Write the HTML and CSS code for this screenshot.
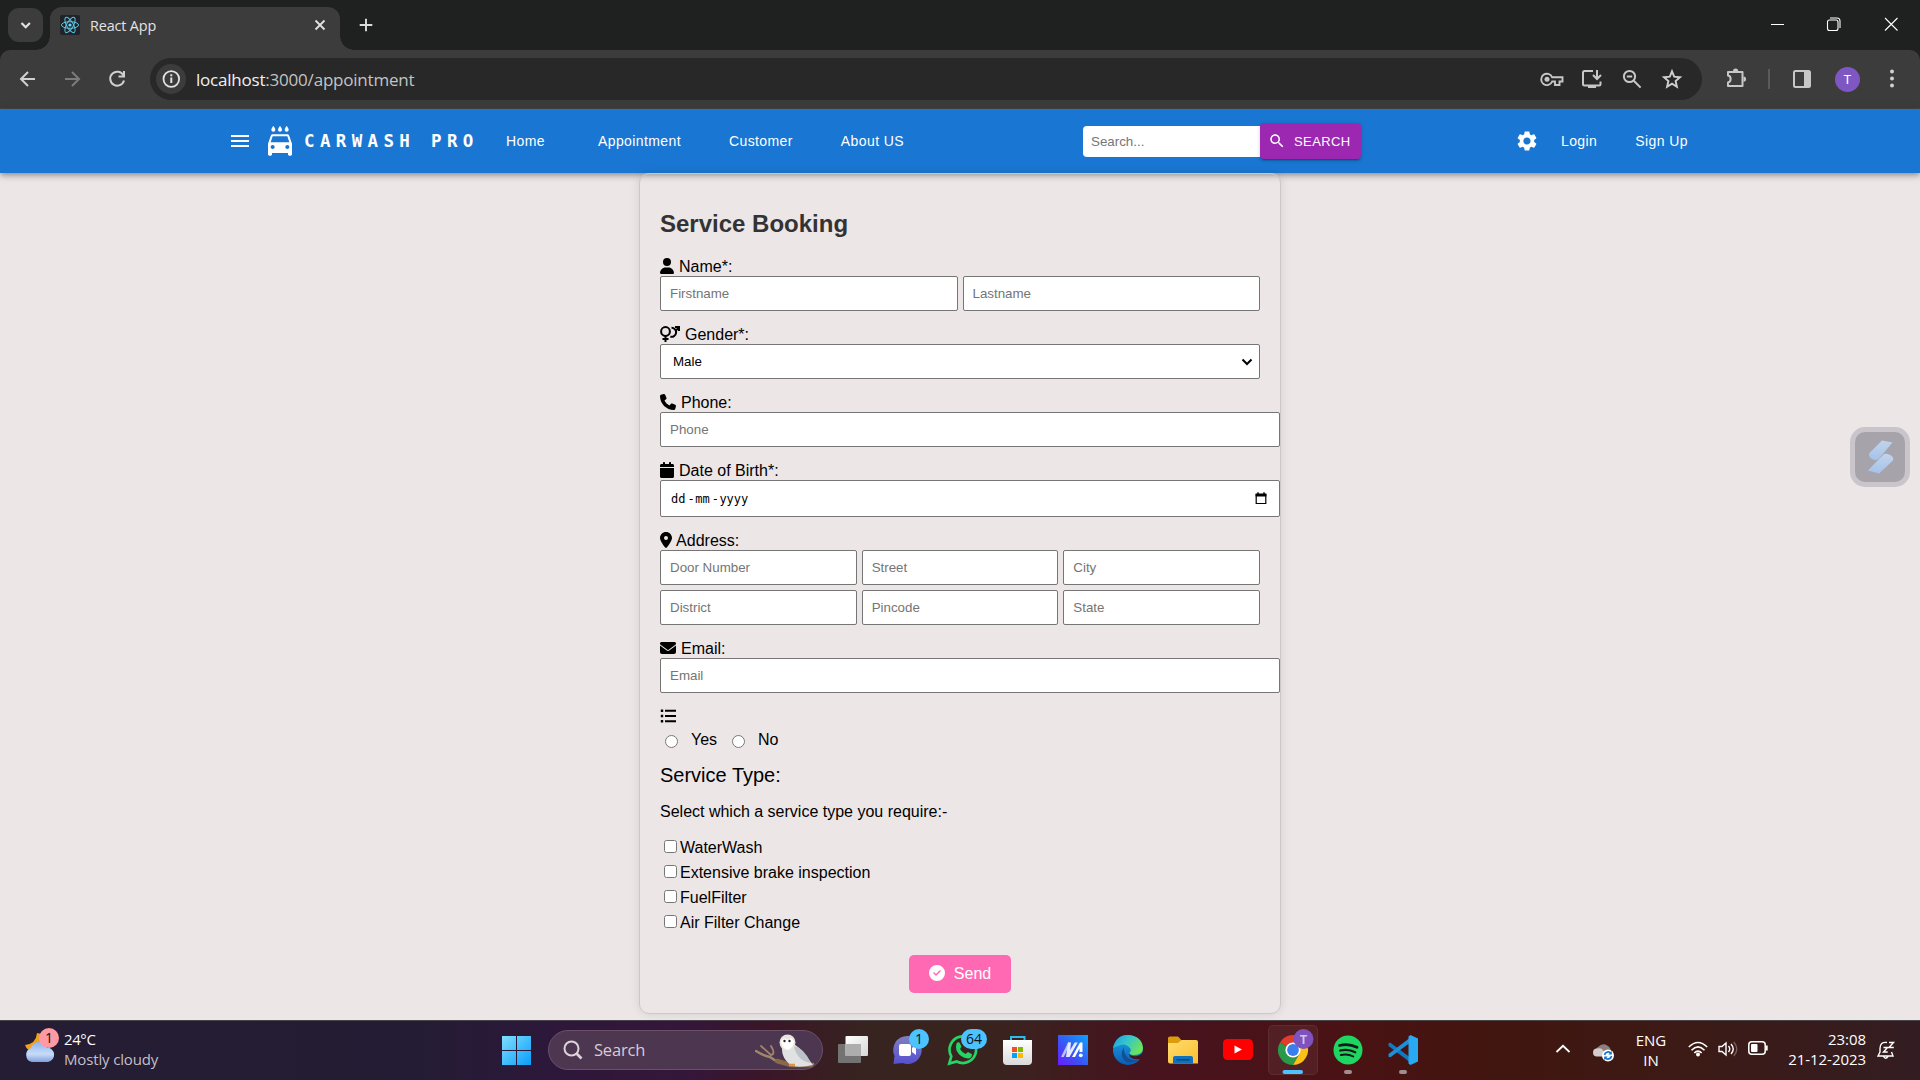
FILE: index.html
```html
<!DOCTYPE html>
<html lang="en">
<head>
<meta charset="utf-8">
<title>React App</title>
<link rel="stylesheet" href="styles.css">
</head>
<body>
<div class="browser">
<div class="tabstrip">
  <div class="tab-search"><svg width="35" height="34" viewBox="0 0 35 34"><path d="M13.500 15l4.200 4.200 4.200-4.200" fill="none" stroke="#e3e3e3" stroke-width="2.200"/></svg></div>
  <div class="tab">
    <svg class="favicon" width="20" height="20" viewBox="0 0 20 20"><rect width="20" height="20" rx="2" fill="#20232a"/><g fill="none" stroke="#5cc4dd" stroke-width="1"><ellipse cx="10" cy="10" rx="8.600" ry="3.300"/><ellipse cx="10" cy="10" rx="8.600" ry="3.300" transform="rotate(60 10 10)"/><ellipse cx="10" cy="10" rx="8.600" ry="3.300" transform="rotate(120 10 10)"/></g><circle cx="10" cy="10" r="1.600" fill="#61dafb"/></svg>
    <span class="tab-title">React App</span>
    <svg class="tab-close" width="12" height="12" viewBox="0 0 12 12"><path d="M1.500 1.500l9 9M10.500 1.500l-9 9" stroke="#e3e3e3" stroke-width="1.800"/></svg>
  </div>
  <svg class="new-tab" width="14" height="14" viewBox="0 0 14 14"><path d="M7 .7v12.600M.7 7h12.600" stroke="#dcdcdc" stroke-width="1.900"/></svg>
  <div class="window-controls">
    <svg width="16" height="16" viewBox="0 0 16 16"><path d="M2 8.500h13" stroke="#fff" stroke-width="1"/></svg>
    <svg width="16" height="16" viewBox="0 0 16 16"><g fill="none" stroke="#fff" stroke-width="1.100"><rect x="1.500" y="4" width="10.500" height="10.500" rx="2"/><path d="M4 2h7a3 3 0 0 1 3 3v7"/></g></svg>
    <svg width="16" height="16" viewBox="0 0 16 16"><path d="M2 2l12.500 12.500M14.500 2L2 14.500" stroke="#fff" stroke-width="1.100"/></svg>
  </div>
</div>
<div class="toolbar">
  <div class="nav-buttons">
    <svg width="24" height="24" viewBox="0 0 24 24"><path d="M19 12H5.500M12 5l-7 7 7 7" fill="none" stroke="#d0d0d0" stroke-width="2"/></svg>
    <svg width="24" height="24" viewBox="0 0 24 24"><path d="M4 12H17.500M11 5l7 7-7 7" fill="none" stroke="#7c7c7c" stroke-width="2"/></svg>
    <svg width="24" height="24" viewBox="0 0 24 24"><path d="M17.500 8.500A7 7 0 1 0 18 13.500" fill="none" stroke="#d0d0d0" stroke-width="2"/><path d="M18 4v5.500h-5.500" fill="none" stroke="#d0d0d0" stroke-width="2"/></svg>
  </div>
  <div class="omnibox">
    <div class="site-info"><svg width="30" height="30" viewBox="0 0 30 30"><circle cx="15.300" cy="15" r="7.800" fill="none" stroke="#e3e3e3" stroke-width="1.800"/><path d="M15.300 13.500v5.500M15.300 10.300v2" stroke="#e3e3e3" stroke-width="2"/></svg></div>
    <div class="url">localhost<span>:3000/appointment</span></div>
    <div class="omni-icons">
      <svg width="24" height="24" viewBox="0 0 24 24"><g fill="none" stroke="#c7c7c7" stroke-width="1.900"><path d="M12.200 10.300A5.700 5.700 0 1 0 12.200 14.500H15v3.500h4.500v-3.500H22.500v-4.200z"/></g><circle cx="7" cy="12.300" r="2.500" fill="#c7c7c7"/></svg>
      <svg width="24" height="24" viewBox="0 0 24 24"><g fill="none" stroke="#c7c7c7" stroke-width="2"><path d="M13 4H4.500a1.500 1.500 0 0 0-1.500 1.500V17a1.500 1.500 0 0 0 1.500 1.500H19a1.500 1.500 0 0 0 1.500-1.500v-2.500"/><path d="M17 3v8M13 8l4 4 4-4"/></g><path d="M8 18h8v3H8z" fill="#c7c7c7"/></svg>
      <svg width="24" height="24" viewBox="0 0 24 24"><g fill="none" stroke="#c7c7c7" stroke-width="2"><circle cx="9.500" cy="9.500" r="5.600"/><path d="M13.800 13.800l6.800 6.800M6.800 9.500h5.400"/></g></svg>
      <svg width="24" height="24" viewBox="0 0 24 24"><path d="M12 4.300l2.200 5.400 5.800.5-4.400 3.800 1.300 5.700-4.900-3-4.900 3 1.300-5.700L4 10.200l5.800-.5z" fill="none" stroke="#d0d0d0" stroke-width="1.900"/></svg>
    </div>
  </div>
  <svg class="extensions" width="24" height="24" viewBox="0 0 24 24"><path d="M4 5h14.500v14H4v-3.500c3.500-.5 3.500-6.500 0-7z" fill="none" stroke="#c7c7c7" stroke-width="2" stroke-linejoin="round"/><path d="M9 4a2.600 2.600 0 0 1 5.200 0zM19.500 9.500a2.600 2.600 0 0 1 0 5.200z" fill="#c7c7c7"/></svg>
  <span class="divider"></span>
  <svg class="sidepanel" width="20" height="20" viewBox="0 0 20 20"><rect x="2" y="2" width="16" height="16" rx="1.500" fill="none" stroke="#c7c7c7" stroke-width="2"/><path d="M12 2h6v16h-6z" fill="#c7c7c7"/></svg>
  <div class="avatar">T</div>
  <svg class="kebab" width="6" height="20" viewBox="0 0 6 20"><g fill="#d0d0d0"><circle cx="3" cy="2.500" r="2"/><circle cx="3" cy="9.500" r="2"/><circle cx="3" cy="16.500" r="2"/></g></svg>
</div>
</div>

<header class="appbar">
  <svg class="menu" width="24" height="24" viewBox="0 0 24 24" fill="#fff"><path d="M3 18h18v-2H3v2zm0-5h18v-2H3v2zm0-7v2h18V6H3z"/></svg>
  <svg class="car" width="32" height="32" viewBox="0 0 24 24" fill="#fff"><path d="M17 5c.83 0 1.500-.67 1.500-1.500 0-1-1.500-2.700-1.500-2.700s-1.500 1.700-1.500 2.700c0 .83.67 1.500 1.500 1.500zm-5 0c.83 0 1.500-.67 1.500-1.500 0-1-1.500-2.700-1.500-2.700s-1.500 1.700-1.500 2.700c0 .83.67 1.500 1.500 1.500zM7 5c.83 0 1.500-.67 1.500-1.500C8.500 2.500 7 .8 7 .8S5.500 2.500 5.500 3.500C5.500 4.330 6.170 5 7 5zm11.920 3.010C18.720 7.420 18.160 7 17.500 7h-11c-.66 0-1.210.42-1.420 1.010L3 14v8c0 .55.45 1 1 1h1c.55 0 1-.45 1-1v-1h12v1c0 .55.45 1 1 1h1c.55 0 1-.45 1-1v-8l-2.080-5.990zM6.500 18c-.83 0-1.500-.67-1.500-1.500S5.670 15 6.500 15s1.500.67 1.500 1.500S7.330 18 6.500 18zm11 0c-.83 0-1.500-.67-1.500-1.500s.67-1.500 1.500-1.500 1.500.67 1.500 1.500-.67 1.500-1.500 1.500zM5 13l1.500-4.500h11L19 13H5z"/></svg>
  <div class="brand">CARWASH PRO</div>
  <nav class="links"><a>Home</a><a>Appointment</a><a>Customer</a><a>About US</a></nav>
  <div class="search">
    <input class="search-input" placeholder="Search...">
    <button class="search-button"><svg width="18" height="18" viewBox="0 0 24 24" fill="#fff"><path d="M15.500 14h-.79l-.28-.27C15.410 12.590 16 11.110 16 9.500 16 5.910 13.090 3 9.500 3S3 5.910 3 9.500 5.910 16 9.500 16c1.610 0 3.090-.59 4.230-1.570l.27.28v.79l5 4.990L20.490 19l-4.990-5zm-6 0C7.010 14 5 11.990 5 9.500S7.010 5 9.500 5 14 7.010 14 9.500 11.990 14 9.500 14z"/></svg>SEARCH</button>
  </div>
  <svg class="gear" width="24" height="24" viewBox="0 0 24 24" fill="#fff"><path d="M19.140 12.940c.04-.3.06-.61.06-.94 0-.32-.02-.64-.07-.94l2.030-1.580c.18-.14.23-.41.12-.61l-1.920-3.320c-.12-.22-.37-.29-.59-.22l-2.390.96c-.5-.38-1.030-.7-1.620-.94l-.36-2.540c-.04-.24-.24-.41-.48-.41h-3.840c-.24 0-.43.17-.47.41l-.36 2.540c-.59.24-1.130.57-1.620.94l-2.390-.96c-.22-.08-.47 0-.59.22L2.740 8.870c-.12.21-.08.47.12.61l2.030 1.580c-.05.3-.09.63-.09.94s.02.64.07.94l-2.030 1.580c-.18.14-.23.41-.12.61l1.920 3.320c.12.22.37.29.59.22l2.390-.96c.5.38 1.030.7 1.620.94l.36 2.540c.05.24.24.41.48.41h3.840c.24 0 .44-.17.47-.41l.36-2.540c.59-.24 1.130-.56 1.620-.94l2.390.96c.22.08.47 0 .59-.22l1.920-3.320c.12-.22.07-.47-.12-.61l-2.010-1.580zM12 15.600c-1.980 0-3.600-1.620-3.600-3.600s1.620-3.600 3.600-3.600 3.600 1.620 3.600 3.600-1.620 3.600-3.600 3.600z"/></svg>
  <nav class="account"><a>Login</a><a>Sign Up</a></nav>
</header>

<main class="page">
  <form class="card">
    <h2>Service Booking</h2>
    <div class="field">
      <label><svg width="14" height="16" viewBox="0 0 448 512"><path d="M224 256A128 128 0 1 0 224 0a128 128 0 1 0 0 256zm-45.700 48C79.800 304 0 383.800 0 482.300C0 498.700 13.300 512 29.700 512H418.300c16.400 0 29.700-13.300 29.700-29.700C448 383.800 368.200 304 269.700 304H178.300z"/></svg> Name*:</label>
      <div class="grid two"><input placeholder="Firstname"><input placeholder="Lastname"></div>
    </div>
    <div class="field">
      <label><svg width="20" height="16" viewBox="0 0 20 16"><g fill="none" stroke="#000" stroke-width="2"><circle cx="5.500" cy="5.500" r="4.400"/><path d="M5.500 10v6M2.500 13h6"/><path d="M11.500 1.800A4.500 4.500 0 1 1 10.300 10.600M15.800 4.600L19 1.200M15 1H19v4"/></g></svg> Gender*:</label>
      <div class="select">Male<svg width="12" height="8" viewBox="0 0 12 8"><path d="M1.500 1.500L6 6l4.500-4.500" fill="none" stroke="#000" stroke-width="2"/></svg></div>
    </div>
    <div class="field wide">
      <label><svg width="16" height="16" viewBox="0 0 512 512"><path d="M164.900 24.600c-7.700-18.600-28-28.500-47.400-23.200l-88 24C12.100 30.200 0 46 0 64C0 311.400 200.600 512 448 512c18 0 33.800-12.100 38.600-29.500l24-88c5.300-19.400-4.600-39.700-23.200-47.400l-96-40c-16.300-6.800-35.200-2.100-46.300 11.600L304.700 368C234.300 334.700 177.300 277.700 144 207.300L193.300 167c13.700-11.200 18.400-30 11.600-46.300l-40-96z"/></svg> Phone:</label>
      <input placeholder="Phone">
    </div>
    <div class="field wide">
      <label><svg width="14" height="16" viewBox="0 0 448 512"><path d="M96 32V64H48C21.500 64 0 85.500 0 112v48H448V112c0-26.500-21.500-48-48-48H352V32c0-17.700-14.300-32-32-32s-32 14.300-32 32V64H160V32c0-17.700-14.300-32-32-32S96 14.300 96 32zM448 192H0V464c0 26.500 21.500 48 48 48H400c26.500 0 48-21.500 48-48V192z"/></svg> Date of Birth*:</label>
      <div class="date"><span>dd</span><i>-</i><span>mm</span><i>-</i><span>yyyy</span><svg width="12" height="13" viewBox="0 0 12 13"><path d="M1.200 2.500h9.600v9H1.200z" fill="none" stroke="#000" stroke-width="1.200"/><path d="M.6 1.600h10.800v2.900H.6zM2.300.3h1.400v2H2.300zM8.300.3h1.400v2H8.300z"/></svg></div>
    </div>
    <div class="field">
      <label><svg width="12" height="16" viewBox="0 0 384 512"><path d="M215.700 499.200C267 435 384 279.400 384 192C384 86 298 0 192 0S0 86 0 192c0 87.400 117 243 168.300 307.200c12.300 15.300 35.100 15.300 47.400 0zM192 128a64 64 0 1 1 0 128 64 64 0 1 1 0-128z"/></svg> Address:</label>
      <div class="grid three"><input placeholder="Door Number"><input placeholder="Street"><input placeholder="City"><input placeholder="District"><input placeholder="Pincode"><input placeholder="State"></div>
    </div>
    <div class="field wide">
      <label><svg width="16" height="16" viewBox="0 0 512 512"><path d="M48 64C21.500 64 0 85.500 0 112c0 15.100 7.100 29.300 19.200 38.400L236.800 313.600c11.400 8.500 27 8.500 38.400 0L492.800 150.400c12.100-9.100 19.200-23.300 19.200-38.400c0-26.500-21.500-48-48-48H48zM0 176V384c0 35.300 28.700 64 64 64H448c35.300 0 64-28.700 64-64V176L294.400 339.200c-22.800 17.100-54 17.100-76.800 0L0 176z"/></svg> Email:</label>
      <input placeholder="Email">
    </div>
    <label><svg width="16" height="16" viewBox="0 0 16 16"><path d="M.8 1.500h2.400v2.400H.8zM.8 6.800h2.400v2.400H.8zM.8 12.100h2.400v2.400H.8zM5 1.700h11v2H5zM5 7h11v2H5zM5 12.300h11v2H5z"/></svg></label>
    <div class="radios"><input type="radio" name="ac"><span>Yes</span><input type="radio" name="ac"><span>No</span></div>
    <h6>Service Type:</h6>
    <p>Select which a service type you require:-</p>
    <div class="checks">
      <div><input type="checkbox">WaterWash</div>
      <div><input type="checkbox">Extensive brake inspection</div>
      <div><input type="checkbox">FuelFilter</div>
      <div><input type="checkbox">Air Filter Change</div>
    </div>
    <button class="send" type="button"><svg width="16" height="16" viewBox="0 0 512 512" fill="#fff"><path d="M256 512A256 256 0 1 0 256 0a256 256 0 1 0 0 512zM369 209L241 337c-9.400 9.400-24.600 9.400-33.900 0l-64-64c-9.400-9.400-9.400-24.600 0-33.900s24.600-9.400 33.900 0l47 47L335 175c9.400-9.400 24.600-9.400 33.900 0s9.400 24.600 0 33.900z"/></svg><span>Send</span></button>
  </form>
  <div class="float-button"><svg width="50" height="50" viewBox="0 0 50 50"><defs><linearGradient id="fl" x1="0" y1="0" x2="0" y2="1"><stop offset="0" stop-color="#c2d4ec"/><stop offset="1" stop-color="#a5c2ea"/></linearGradient></defs><path d="M27 8.500L37.500 10.500 24 26.500Q22 28.500 19 28Q13.500 25.500 14 21.500z" fill="url(#fl)"/><path d="M13 38.500L28.500 22.500Q31.500 20.500 36 23.500Q39 25.500 38 28.500L24 41.500z" fill="url(#fl)"/></svg></div>
</main>

<footer class="taskbar">
  <div class="weather">
    <svg width="30" height="36" viewBox="0 0 30 36"><defs><linearGradient id="cl" x1="0" y1="0" x2="0" y2="1"><stop offset="0" stop-color="#8fb4ee"/><stop offset=".6" stop-color="#c9dcf8"/><stop offset="1" stop-color="#7fa0de"/></linearGradient></defs><path d="M12 4q-1 11-12 12 2 7 12 7 9-2 9-12-1-6-9-7z" fill="#f0a020"/><path d="M7 33a7.300 7.300 0 0 1-1-14A8.500 8.500 0 0 1 22 18.500 7.300 7.300 0 0 1 23 33z" fill="url(#cl)"/></svg>
    <span class="alert">1</span>
    <div class="weather-text"><b>24°C</b><span>Mostly cloudy</span></div>
  </div>
  <div class="apps">
    <svg width="50" height="50" viewBox="0 0 50 50"><defs><linearGradient id="wn" x1="0" y1="0" x2="1" y2="1"><stop offset="0" stop-color="#7fe0ff"/><stop offset="1" stop-color="#0a9cfb"/></linearGradient></defs><path d="M11 11h14v14H11zM26 11h14v14H26zM11 26h14v14H11zM26 26h14v14H26z" fill="url(#wn)"/></svg>
    <div class="task-search">
      <svg class="lens" width="20" height="20" viewBox="0 0 20 20"><g fill="none" stroke="#ddd3dc" stroke-width="2"><circle cx="8.500" cy="8.500" r="7"/><path d="M13.500 13.500l5 5" stroke-width="2.600"/></g></svg>
      <span>Search</span>
      <svg class="owl" width="60" height="34" viewBox="0 0 60 34"><g fill="none" stroke="#a0866b" stroke-linecap="round"><path d="M1 17q8 5 14 6 9 7 19 7h24" stroke-width="2.500"/><path d="M6 12l10 9q5-1 0-9" stroke-width="1.800"/><path d="M22 27l14 4h20" stroke-width="4.500" stroke="#8a6848"/></g><path d="M27 12q5 0 8-3 6 1 12 8 5 6 11 14-12 3-20 1-12-6-11-20z" fill="#dfe1e3"/><path d="M39 12q10 2 17 17-14-2-17-17z" fill="#bcc3c8"/><circle cx="32.500" cy="8.500" r="8" fill="#e9e4dd"/><path d="M26 7q3-5 6.500-1Q36 2 39 7q-1 8-6.500 9Q27 15 26 7z" fill="#fff"/><circle cx="29.500" cy="7" r="1.200" fill="#29212b"/><circle cx="34.500" cy="7" r="1.200" fill="#29212b"/><path d="M34 31h6" stroke="#e7923c" stroke-width="2.500"/></svg>
    </div>
    <svg width="50" height="50" viewBox="0 0 50 50"><defs><linearGradient id="tv" x1="0" y1="0" x2="1" y2="1"><stop offset="0" stop-color="#fff"/><stop offset="1" stop-color="#d7d7d7"/></linearGradient></defs><rect x="10" y="19" width="23" height="19" rx="1" fill="#737373"/><rect x="17.500" y="11" width="22.500" height="20" rx="1" fill="url(#tv)"/><path d="M17.500 19H33v12H17.500z" fill="#adadad"/></svg>
    <svg width="50" height="50" viewBox="0 0 50 50"><defs><linearGradient id="ch" x1="0" y1="0" x2="0" y2="1"><stop offset="0" stop-color="#7f7fc0"/><stop offset="1" stop-color="#5750d0"/></linearGradient></defs><path d="M24.500 11a14 14 0 1 1-5 27l-9 1 1-8A14 14 0 0 1 24.500 11z" fill="url(#ch)"/><rect x="16" y="19" width="12" height="12" rx="2" fill="#fff"/><path d="M29 23l4-3v10l-4-3z" fill="#fff"/><circle cx="36" cy="14" r="10" fill="#4cc2ff"/><text x="36" y="19" text-anchor="middle" class="badge-text">1</text></svg>
    <svg width="50" height="50" viewBox="0 0 50 50"><path d="M11.300 38.600l2-7.300A13.300 13.300 0 1 1 18.700 36.500z" fill="none" stroke="#25d366" stroke-width="2.700"/><path d="M18.500 18.500q2-2.500 3.500 0l1.500 3.200q-2 2-1 3 2 3 5 4.300l2.500-2 4 2.200q0 4-4 4.300-8-1-11.500-8-1-4 0-7z" fill="#25d366"/><rect x="23" y="4" width="26" height="20" rx="10" fill="#4cc2ff"/><text x="36" y="19" text-anchor="middle" class="badge-text">64</text></svg>
    <svg width="50" height="50" viewBox="0 0 50 50"><defs><linearGradient id="st" x1="0" y1="0" x2="0" y2="1"><stop offset="0" stop-color="#fff"/><stop offset="1" stop-color="#dadada"/></linearGradient></defs><path d="M18 16v-4h13.500v4" fill="none" stroke="#28bdee" stroke-width="2"/><path d="M10 15h29v21a4 4 0 0 1-4 4H14a4 4 0 0 1-4-4z" fill="url(#st)"/><path d="M19 22h5v5h-5z" fill="#f25022"/><path d="M25 22h5v5h-5z" fill="#7fba00"/><path d="M19 28h5v5h-5z" fill="#00a4ef"/><path d="M25 28h5v5h-5z" fill="#ffb900"/></svg>
    <svg width="50" height="50" viewBox="0 0 50 50"><defs><linearGradient id="ma" x1="1" y1="0" x2="0" y2="1"><stop offset="0" stop-color="#0aa4ff"/><stop offset=".6" stop-color="#3c50f4"/><stop offset="1" stop-color="#6a1cff"/></linearGradient></defs><path d="M10 10h30v30H10z" fill="url(#ma)"/><path d="M13 32l7-14.500h2.800l-7 14.500z" fill="#b9c0fb"/><path d="M18 32l2-14.500h3l-.8 7.500 4.500-7.500h3L21.500 32z" fill="#e6e9ff"/><path d="M24 32l8-14.500h2.500v9.500h-3v-3.500L27 32z" fill="#fff"/><circle cx="32.800" cy="30.300" r="1.900" fill="#fff"/></svg>
    <svg width="50" height="50" viewBox="0 0 50 50"><defs><linearGradient id="eg" x1="0" y1="0" x2="1" y2=".5"><stop offset="0" stop-color="#1c9be4"/><stop offset=".5" stop-color="#35c6cb"/><stop offset="1" stop-color="#6be35c"/></linearGradient><linearGradient id="eb" x1="0" y1="0" x2="0" y2="1"><stop offset="0" stop-color="#1aa7e7"/><stop offset="1" stop-color="#0c5cb4"/></linearGradient></defs><circle cx="25" cy="25" r="15" fill="url(#eb)"/><path d="M10 23Q13 10 25 10q14 1 15 13 0 7-9 7-4 0-5-2 3-2 1-5-5-6-12-2-3 1-5 2z" fill="url(#eg)"/><path d="M21 22q-5 8 1 14 5 4 15-2-6 3-12-1-5-5-4-11z" fill="#124f95"/><path d="M26 28q2 4 8 3 5-1 6-5v8l-3 0q-6 1-10-2z" fill="#43141e"/></svg>
    <svg width="50" height="50" viewBox="0 0 50 50"><defs><linearGradient id="fd" x1="0" y1="0" x2="1" y2="1"><stop offset="0" stop-color="#ffdc70"/><stop offset="1" stop-color="#fbbf2c"/></linearGradient></defs><path d="M10 13q0-1.500 2-1.500h8l3 3v6H10z" fill="#dc9c0c"/><path d="M10 18h10l3.500-3H38q2 0 2 2v21.500H12q-2 0-2-2z" fill="url(#fd)"/><path d="M15 38.500V33q0-2 2-2h16q2 0 2 2v5.500z" fill="#1071bd"/><path d="M18.500 34.800h13" stroke="#0b4585" stroke-width="1.500"/></svg>
    <svg width="50" height="50" viewBox="0 0 50 50"><rect x="10" y="14" width="30" height="21" rx="4.500" fill="#f00"/><path d="M21.500 20.500v8l7.500-4z" fill="#fff"/></svg>
    <div class="app-active"><svg width="50" height="50" viewBox="0 0 50 50"><path d="M25 25L12 17.500A15 15 0 0 1 38 17.500H25z" fill="#e33b2e"/><path d="M12 17.500A15 15 0 0 0 25 40l6.500-11.300L25 25z" fill="#2a9a4a"/><path d="M38 17.500A15 15 0 0 1 25 40l6.500-11.300L25 17.500z" fill="#fbc116"/><circle cx="25" cy="25" r="7.600" fill="#fff"/><circle cx="25" cy="25" r="5.900" fill="#3b7ded"/><circle cx="35.500" cy="14" r="10" fill="#7f52bd"/><text x="35.500" y="18.500" text-anchor="middle" class="t-text">T</text><rect x="14.500" y="45" width="20.500" height="4" rx="2" fill="#4cc2ff"/></svg></div>
    <svg width="50" height="50" viewBox="0 0 50 50"><circle cx="25" cy="25" r="14.500" fill="#1ed760"/><g fill="none" stroke="#15171a" stroke-linecap="round"><path d="M16.500 20.500q9-2.500 17.500 1.800" stroke-width="2.800"/><path d="M17.200 25.500q8-2 15 1.800" stroke-width="2.300"/><path d="M17.800 30q7-1.500 12.500 1.500" stroke-width="1.900"/></g><rect x="21" y="45" width="8" height="4" rx="2" fill="#a08f90"/></svg>
    <svg width="50" height="50" viewBox="0 0 50 50"><path d="M10.500 18.500q1.500-1.500 3 0L33 33v5L10.500 21z" fill="#1279c0"/><path d="M10.500 31.500q1.500 1.500 3 0L33 17v-5L10.500 29z" fill="#1b8fda"/><path d="M32.500 10l7.500 3.500v23L32.500 40l-2-1.500V11.500z" fill="#29a9f4"/><rect x="21" y="45" width="8" height="4" rx="2" fill="#a08f90"/></svg>
  </div>
  <div class="tray">
    <svg class="chevron" width="16" height="10" viewBox="0 0 16 10"><path d="M1.500 8L8 1.800 14.500 8" fill="none" stroke="#fff" stroke-width="1.800"/></svg>
    <svg class="cloud" width="22" height="20" viewBox="0 0 22 20"><path d="M5 14a5 5 0 0 1 0-9q6-6 12 1l2 6z" fill="#8c7f7d"/><path d="M4 14.500a4 4 0 0 1 0-8q5-1 6 2l4 6z" fill="#d4cdcc"/><circle cx="15" cy="13.500" r="6" fill="#fff"/><path d="M11.500 13a3.600 3.600 0 0 1 6.500-1.500M18.500 14a3.600 3.600 0 0 1-6.500 1.500" fill="none" stroke="#1673c9" stroke-width="1.700"/><path d="M18.800 9v3.500h-3.500zM11.200 18v-3.500h3.500z" fill="#1673c9"/></svg>
    <div class="lang"><span>ENG</span><span>IN</span></div>
    <svg class="wifi" width="20" height="16" viewBox="0 0 20 16"><g fill="none" stroke="#fff" stroke-width="1.600"><path d="M.8 6q9.200-9 18.400 0M3.500 9.200q6.500-6.600 13 0M6.300 12q3.700-3.700 7.400 0"/></g><circle cx="10" cy="13.500" r="2" fill="#fff"/></svg>
    <svg class="speaker" width="20" height="16" viewBox="0 0 20 16"><g fill="none" stroke="#fff" stroke-width="1.400"><path d="M1 5.500h3L8 2v12l-4-3.500H1z"/><path d="M10.500 5q2.500 3 0 6M13 3q4.500 5 0 10"/></g><path d="M15.800 1q6 7 0 14" fill="none" stroke="#78605d" stroke-width="1.300"/></svg>
    <svg class="battery" width="20" height="14" viewBox="0 0 20 14"><rect x=".8" y=".8" width="16.400" height="12.400" rx="3" fill="none" stroke="#fff" stroke-width="1.500"/><rect x="3" y="3" width="6.500" height="8" rx="1" fill="#fff"/><path d="M18 4.500h1.700v5H18z" fill="#fff"/></svg>
    <div class="clock"><span>23:08</span><span>21-12-2023</span></div>
    <svg class="bell" width="20" height="20" viewBox="0 0 20 20"><g fill="none" stroke="#fff" stroke-width="1.400"><path d="M11 2.500Q4 1.500 4 8.500V12L2 16h15l-1.500-4M7.500 16.500q2 3.500 4.500 0"/><path d="M7.500 7.500h4l-4 4.500h4.200M13 2.500h4.500L13 7.500h4.800"/></g></svg>
  </div>
</footer>
</body>
</html>
```
FILE: styles.css
```css
* { box-sizing: border-box; }
body { margin: 0; width: 1920px; height: 1080px; overflow: hidden; display: flex; flex-direction: column; background: #ece6e6; font-family: "Liberation Sans", Arial, sans-serif; font-size: 16px; color: #000; }
svg { display: block; flex: none; }
button, input { margin: 0; font-family: inherit; }

.browser { flex: none; background: #1f2120; }
.tabstrip { height: 50px; display: flex; font-family: "Open Sans", "Noto Sans", sans-serif; padding-left: 8px; }
.tab-search { width: 35px; height: 34px; margin-top: 8px; border-radius: 11px; background: #3c3c3c; }
.tab { position: relative; width: 290px; height: 43px; margin: 7px 0 0 7px; padding: 0 14px 0 10px; display: flex; align-items: center; border-radius: 12px 12px 0 0; background: #3c3c3c; }
.tab::before, .tab::after { content: ""; position: absolute; bottom: 0; width: 14px; height: 14px; }
.tab::before { left: -14px; background: radial-gradient(circle at 0 0, transparent 13.5px, #3c3c3c 14px); }
.tab::after { right: -14px; background: radial-gradient(circle at 100% 0, transparent 13.5px, #3c3c3c 14px); }
.favicon { margin-bottom: 7px; }
.tab-title { margin: 0 auto 6px 10px; font-size: 14.4px; letter-spacing: -0.15px; color: #e3e3e3; }
.tab-close { margin-bottom: 7px; }
.new-tab { margin: 18px 0 0 19px; }
.window-controls { display: flex; gap: 41px; margin: 16px 21px 0 auto; }

.toolbar { height: 59px; display: flex; align-items: center; padding: 0 0 0 16px; background: #3c3c3c; border-bottom: 1px solid #474543; border-radius: 10px 10px 0 0; }
.nav-buttons { display: flex; gap: 21px; width: 134px; }
.omnibox { width: 1552px; height: 42px; display: flex; align-items: center; padding: 0 18px 0 6px; border-radius: 21px; background: #282828; }
.site-info { width: 30px; height: 30px; border-radius: 50%; background: #3c3c3c; }
.url { margin: 0 auto 0 10px; font-family: "Open Sans", "Noto Sans", sans-serif; font-size: 17px; letter-spacing: -0.21px; color: #f0f0f0; }
.url span { color: #c3c3c3; }
.omni-icons { display: flex; gap: 16px; }
.extensions { margin-left: 22px; }
.divider { width: 2px; height: 20px; margin-left: 20px; background: #5a5a5a; }
.sidepanel { margin-left: 22px; }
.avatar { width: 25px; height: 25px; margin-left: 23px; border-radius: 50%; background: #7e57c2; color: #fff; font: 13px/25px Roboto, sans-serif; text-align: center; }
.kebab { margin-left: 29px; }

.appbar { position: relative; height: 64px; flex: none; display: flex; align-items: center; padding-left: 228px; background: #1976d2; color: #fff; box-shadow: 0 2px 4px -1px rgba(0,0,0,.2), 0 4px 5px 0 rgba(0,0,0,.14), 0 1px 10px 0 rgba(0,0,0,.12); }
.car { margin-left: 12px; }
.brand { width: 202px; margin-left: 8px; font: bold 17.5px/32px "DejaVu Sans Mono", monospace; letter-spacing: 5.35px; white-space: nowrap; }
.links, .account { display: flex; font-size: 14px; letter-spacing: 0.4px; }
.links { gap: 48px; width: 577px; }
.links a:first-child { margin-right: 5px; }
.search { display: flex; align-items: center; }
.search-input { width: 177px; height: 31px; border: 0; border-radius: 4px 0 0 4px; padding: 0 8px; font-size: 13.333px; }
.search-button { width: 101px; height: 36px; display: flex; align-items: center; gap: 8px; padding: 0 8px; border: 0; border-radius: 4px; background: #9c27b0; color: #fff; font-size: 13px; letter-spacing: 0.4px; box-shadow: 0 3px 1px -2px rgba(0,0,0,.2), 0 2px 2px 0 rgba(0,0,0,.14), 0 1px 5px 0 rgba(0,0,0,.12); }
.gear { margin-left: 154px; }
.account { margin-left: 22px; gap: 38px; }

.page { position: relative; flex: 1; display: flex; justify-content: center; align-items: flex-start; }
.card { width: 642px; height: 841px; padding: 36px 20px 0; border: 1px solid #ccc8c8; border-radius: 10px; box-shadow: 0 0 10px rgba(0,0,0,.1); display: flex; flex-direction: column; }
h2 { margin: 0 0 21px; font-size: 24px; line-height: 27px; color: #333; }
label { display: block; height: 18px; line-height: 18px; white-space: pre; }
label svg { display: inline-block; vertical-align: -2px; margin-right: 0.55px; }
.field { margin-bottom: 15px; }
.wide { width: 620px; }
.grid { display: grid; gap: 5px; }
.two { grid-template-columns: 1fr 1fr; }
.three { grid-template-columns: 1fr 1fr 1fr; }
.field input, .select, .date { width: 100%; height: 35px; min-width: 0; border: 1px solid #767676; border-radius: 2px; background: #fff; padding: 0 9px; font-size: 13.333px; }
.field input { display: block; }
input::placeholder { color: #757575; opacity: 1; }
.select { display: flex; align-items: center; justify-content: space-between; padding: 0 6px 0 12px; }
.date { height: 37px; display: flex; align-items: center; padding: 0 12px 0 10px; font: 12px "DejaVu Sans Mono", monospace; }
.date i { font-style: normal; padding: 0 0.5px 0 2px; }
.date svg { margin-left: auto; }
.radios { height: 33px; display: flex; align-items: flex-start; padding: 5px 0 0 5px; line-height: 18px; }
.radios input { width: 13px; height: 13px; margin: 4px 13px 0 0; }
.radios span { width: 41px; }
h6 { margin: 0; font-size: 20px; font-weight: 400; line-height: 32px; }
p { margin: 12px 0 14px; line-height: 18px; }
.checks div { height: 25px; display: flex; align-items: center; }
.checks input { width: 13px; height: 13px; margin: 0 3px 2px 4px; }
.send { width: 102px; height: 38px; margin: 20px auto 0; display: flex; align-items: center; justify-content: center; gap: 9px; padding: 0 0 2px; border: 0; border-radius: 5px; background: #ff69b4; color: #fff; font-size: 16px; }
.send span { padding-top: 2px; }
.float-button { position: absolute; left: 1850px; top: 254px; width: 60px; height: 60px; border: 5px solid #c9c5ca; border-radius: 15px; background: #a6a4aa; }

.taskbar { height: 60px; flex: none; display: flex; position: relative; border-top: 1px solid #49434a; background: linear-gradient(90deg, #251d33 0, #241c34 420px, #2c183a 540px, #35163a 690px, #3b1628 770px, #37231f 860px, #3a231f 1000px, #46131e 1150px, #4a1214 1340px, #42150f 1480px, #3c1a15 1680px, #331d22 1920px); color: #fff; font-family: "Open Sans", "Noto Sans", sans-serif; font-size: 15px; line-height: 20px; }
.weather { position: relative; width: 491px; display: flex; padding: 8px 0 0 25px; }
.alert { position: absolute; left: 39px; top: 7px; width: 20px; height: 20px; border-radius: 50%; background: #ff99a4; color: #111; font-size: 14px; text-align: center; }
.weather-text { margin-left: 9px; display: flex; flex-direction: column; }
.weather-text b { font-weight: 400; letter-spacing: -0.4px; }
.weather-text span { color: #c4bfc8; letter-spacing: -0.15px; }
.apps { display: flex; gap: 5px; padding-top: 4px; }
.task-search { width: 275px; height: 40px; margin: 5px 0 0 2px; display: flex; align-items: center; border: 1px solid #6b5067; border-radius: 20px; background: #4d3650; padding: 0 7px 0 14px; }
.task-search span { margin: 0 auto 0 11px; font-size: 16.5px; letter-spacing: -0.2px; color: #d6cbd6; }
.owl { align-self: flex-end; margin-bottom: 1px; }
.app-active { width: 50px; height: 50px; border-radius: 5px; background: rgba(255,255,255,.06); box-shadow: inset 0 0 0 1px rgba(255,255,255,.06); }
.badge-text { font-size: 14px; fill: #111; }
.t-text { font: bold 12px Roboto, sans-serif; fill: #d3c4ea; }
.tray { display: flex; margin-left: auto; padding: 8px 24px 0 0; }
.tray > svg { margin-top: 12px; }
.tray > .chevron { margin-top: 15px; margin-right: 22px; }
.tray > .cloud { margin-top: 13px; margin-right: 20px; }
.lang, .clock { display: flex; flex-direction: column; }
.lang { width: 32px; align-items: center; margin-right: 21px; padding-top: 1px; }
.clock { width: 80px; align-items: flex-end; margin-right: 10px; letter-spacing: -0.05px; }
.wifi, .speaker { margin-right: 10px; }
.battery { margin-right: 18px; }
.tray > .bell { margin-top: 11px; }
```
